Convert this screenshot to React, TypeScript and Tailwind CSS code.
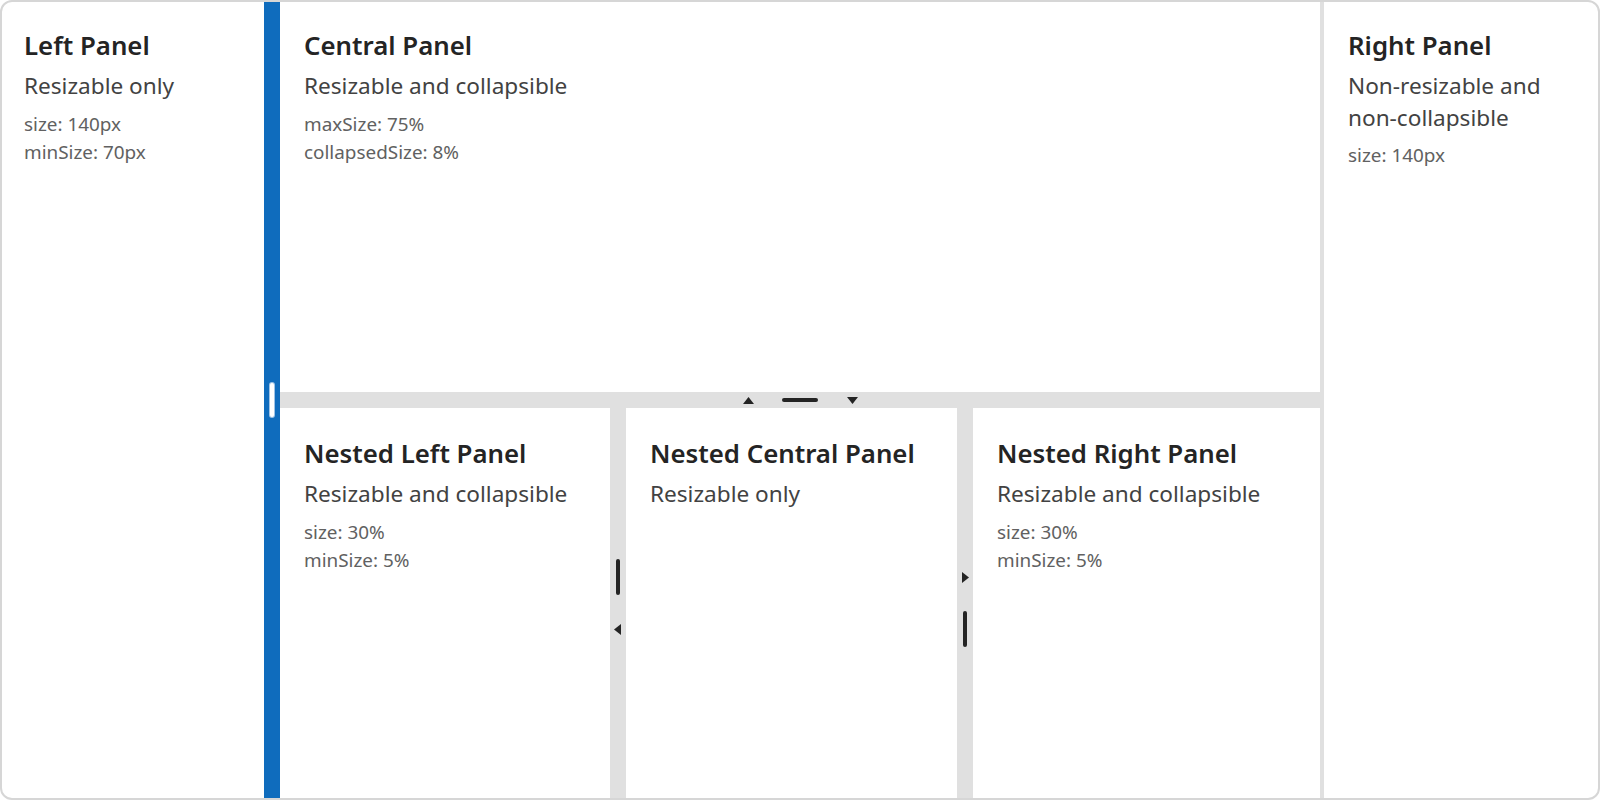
import React from "react";

const font = { fontFamily: '"Noto Sans", "Open Sans", sans-serif' };

function Panel({
  title,
  desc,
  lines,
  pad = "pl-6 pt-[27px]",
}: {
  title: string;
  desc: React.ReactNode;
  lines: string[];
  pad?: string;
}) {
  return (
    <div className={pad + " pr-4"}>
      <div className="text-[25.8px] leading-[32px] font-semibold text-[#242424] whitespace-nowrap">{title}</div>
      <div className="mt-[9px] text-[22.6px] leading-[31.5px] text-[#424242] whitespace-nowrap">{desc}</div>
      {lines.length > 0 && (
        <div className="mt-[8px] text-[18.9px] leading-[28px] text-[#616161] whitespace-nowrap">
          {lines.map((l) => (
            <div key={l}>{l}</div>
          ))}
        </div>
      )}
    </div>
  );
}

function Tri({ dir }: { dir: "up" | "down" | "left" | "right" }) {
  if (dir === "up")
    return (
      <svg width="11" height="7" viewBox="0 0 11 7">
        <polygon points="5.5,0 11,7 0,7" fill="#242424" />
      </svg>
    );
  if (dir === "down")
    return (
      <svg width="11" height="7" viewBox="0 0 11 7">
        <polygon points="0,0 11,0 5.5,7" fill="#242424" />
      </svg>
    );
  if (dir === "left")
    return (
      <svg width="7" height="11" viewBox="0 0 7 11">
        <polygon points="7,0 7,11 0,5.5" fill="#242424" />
      </svg>
    );
  return (
    <svg width="7" height="11" viewBox="0 0 7 11">
      <polygon points="0,0 7,5.5 0,11" fill="#242424" />
    </svg>
  );
}

export default function App() {
  return (
    <div style={font} className="w-[1600px] h-[800px] bg-white">
      <div className="w-full h-full border-2 border-[#d6d6d6] rounded-[12px] overflow-hidden flex">
        {/* Left panel */}
        <div className="w-[262px] shrink-0">
          <Panel
            title="Left Panel"
            desc="Resizable only"
            lines={["size: 140px", "minSize: 70px"]}
            pad="pl-[22px] pt-[27px]"
          />
        </div>
        {/* Blue splitter */}
        <div className="w-[16px] shrink-0 bg-[#0f6cbd] flex items-center justify-center">
          <div className="w-[4px] h-[34px] rounded-full bg-white ring-1 ring-[#9fc3e6]" />
        </div>
        {/* Central */}
        <div className="w-[1040px] shrink-0 flex flex-col">
          <div className="h-[390px] shrink-0">
            <Panel
              title="Central Panel"
              desc="Resizable and collapsible"
              lines={["maxSize: 75%", "collapsedSize: 8%"]}
            />
          </div>
          <div className="h-[16px] shrink-0 bg-[#e0e0e0] flex items-center justify-center gap-[16px]">
            <div className="w-[36px] flex justify-center">
              <Tri dir="up" />
            </div>
            <div className="w-[36px] h-[4px] rounded-full bg-[#242424]" />
            <div className="w-[36px] flex justify-center">
              <Tri dir="down" />
            </div>
          </div>
          <div className="flex-1 flex">
            <div className="w-[330px] shrink-0">
              <Panel
                title="Nested Left Panel"
                desc="Resizable and collapsible"
                lines={["size: 30%", "minSize: 5%"]}
                pad="pl-6 pt-[29px]"
              />
            </div>
            <div className="w-[16px] shrink-0 bg-[#e0e0e0] flex flex-col items-center justify-center gap-[16px]">
              <div className="w-[4px] h-[36px] rounded-full bg-[#242424]" />
              <div className="h-[36px] flex items-center justify-center pr-[1px]">
                <Tri dir="left" />
              </div>
            </div>
            <div className="w-[331px] shrink-0">
              <Panel
                title="Nested Central Panel"
                desc="Resizable only"
                lines={[]}
                pad="pl-6 pt-[29px]"
              />
            </div>
            <div className="w-[16px] shrink-0 bg-[#e0e0e0] flex flex-col items-center justify-center gap-[16px]">
              <div className="h-[36px] flex items-center justify-center pl-[1px]">
                <Tri dir="right" />
              </div>
              <div className="w-[4px] h-[36px] rounded-full bg-[#242424]" />
            </div>
            <div className="flex-1">
              <Panel
                title="Nested Right Panel"
                desc="Resizable and collapsible"
                lines={["size: 30%", "minSize: 5%"]}
                pad="pl-6 pt-[29px]"
              />
            </div>
          </div>
        </div>
        {/* Right separator */}
        <div className="w-[4px] shrink-0 bg-[#e0e0e0]" />
        {/* Right panel */}
        <div className="flex-1">
          <Panel
            title="Right Panel"
            desc={
              <>
                Non-resizable and
                <br />
                non-collapsible
              </>
            }
            lines={["size: 140px"]}
          />
        </div>
      </div>
    </div>
  );
}
